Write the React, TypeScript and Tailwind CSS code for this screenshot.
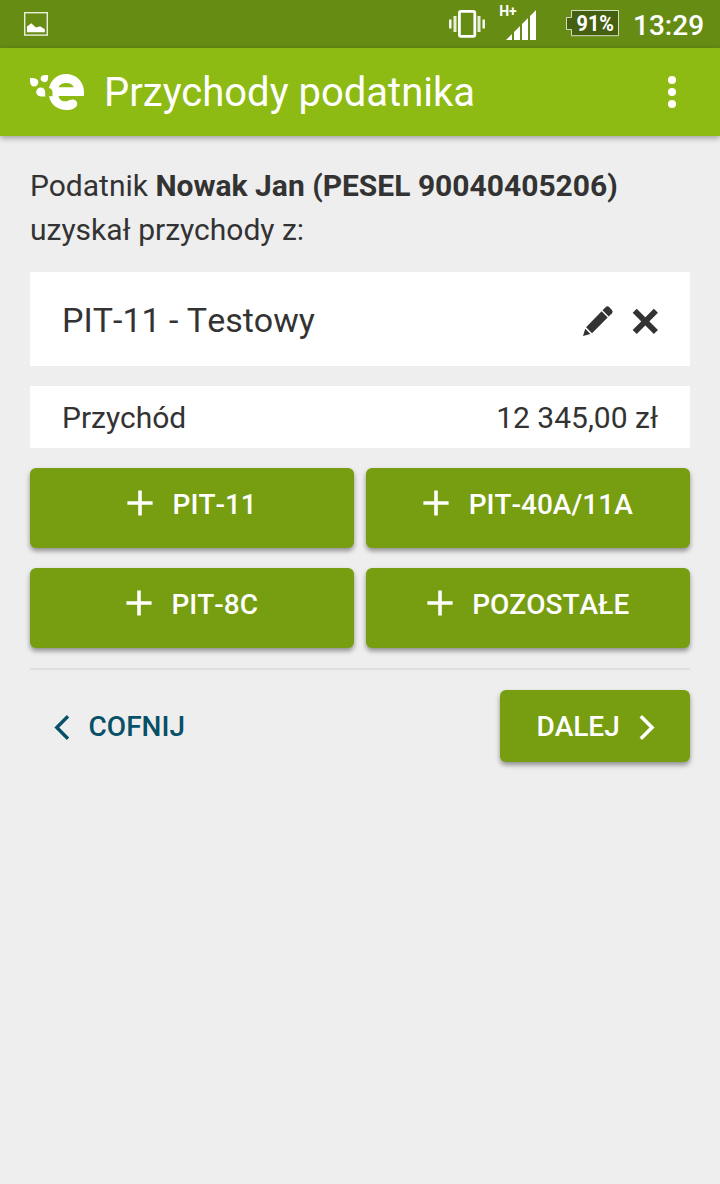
import type { ReactNode } from "react";

function StatusBar() {
  return (
    <div className="flex h-12 items-center bg-[#678c14] pr-4 pl-6 text-white">
      <svg className="h-12 w-6" viewBox="24 0 24 48" fill="none">
        <rect x="24.7" y="12.7" width="22.6" height="22.4" stroke="#fff" strokeOpacity=".85" strokeWidth="1.4" />
        <path d="M27 32.3V26.5L31.3 23.3L36 27.5L40 26.2L44.8 29.3V32.3Z" fill="#fff" />
      </svg>
      <div className="ml-auto flex items-center">
        <svg className="h-12 w-[172px]" viewBox="448 0 172 48" fill="none">
          <rect x="459.4" y="11.4" width="15.4" height="25" rx="1.6" stroke="#fff" strokeWidth="2.8" />
          <path d="M450.3 19.5V28.5M483.7 19.5V28.5" stroke="#fff" strokeWidth="2.4" />
          <path d="M455 16V32M479 16V32" stroke="#fff" strokeOpacity=".85" strokeWidth="3" />
          <path d="M506 40L512 34V40ZM514 32L520 26V40H514ZM522 24L528 18V40H522ZM530 16L536 10V40H530Z" fill="#fff" />
          <path d="M571.5 10.5H618.5V35.7H571.5V29.5H566.5V17.5H571.5Z" fill="#456010" stroke="#fff" strokeOpacity=".75" />
          <text x="499.2" y="16" fill="#fff" fontFamily="Roboto, sans-serif" fontWeight="700" fontSize="14" textLength="17.5" lengthAdjust="spacingAndGlyphs">H+</text>
          <text x="576.5" y="30.6" fill="#fff" fontFamily="Roboto, sans-serif" fontWeight="700" fontSize="21.5" textLength="37.5" lengthAdjust="spacingAndGlyphs">91%</text>
        </svg>
        <span className="ml-[13px] w-[71px] pt-1 text-[28px] leading-none font-medium whitespace-nowrap">13:29</span>
      </div>
    </div>
  );
}

function Logo() {
  return (
    <svg className="h-[88px] w-[56px] shrink-0" viewBox="29 48 56 88" fill="none">
      <path d="M30 78C34 77.6 38.3 78.4 38.3 82.2C38.3 84.6 36.4 86.4 34.1 86.4C30.1 86.4 29.8 82 30 78Z" fill="#fff" />
      <path d="M48 75C48.3 79.3 47.8 82.2 44.4 82.2C42.2 82.2 40.6 80.6 40.6 78.6C40.6 75.2 44 74.8 48 75Z" fill="#fff" />
      <path d="M45.2 96.5C40.5 96.8 36.2 95.9 36.2 91.9C36.2 89.4 38.3 87.5 40.9 87.5C45.2 87.5 45.5 92 45.2 96.5Z" fill="#fff" />
      <path
        d="M49 88C50.8 79.8 57.6 74 66 74C76.5 74 84 82 84 92V96H58.6C59.3 99.8 62.5 102 66.4 101.2C69 100.6 70.5 99.4 73.3 99.6C75.6 99.8 77.3 101.6 77.2 104C76.9 108 71.8 110 66.5 110C57.5 110 50.5 104.5 49 96.3H52.5V92.8C52.5 90.3 51.2 88.4 49 88ZM58.4 87.3H73.9C72.6 84.4 69.8 83 66.3 83C62.7 83 59.6 84.4 58.4 87.3Z"
        fill="#fff"
      />
    </svg>
  );
}

function Header() {
  return (
    <header className="relative flex h-[88px] items-center bg-[#8dbb14] pr-11 pl-[29px] text-white shadow-[0_2px_6px_rgba(0,0,0,0.35)]">
      <Logo />
      <h1 className="ml-[19px] pt-0.5 text-[40px] leading-none whitespace-nowrap">Przychody podatnika</h1>
      <div className="ml-auto flex flex-col gap-1">
        <i className="size-2 rounded-full bg-white" />
        <i className="size-2 rounded-full bg-white" />
        <i className="size-2 rounded-full bg-white" />
      </div>
    </header>
  );
}

function AddButton({ children }: { children: ReactNode }) {
  return (
    <button className="flex h-20 items-start justify-center rounded-[6px] bg-[#779e11] pt-[21px] text-[28px] leading-8 font-medium text-white [font-kerning:none] shadow-[0_3px_5px_rgba(0,0,0,0.4)]">
      <svg className="mt-px mr-[19.4px] size-[26px]" viewBox="0 0 26 26" stroke="#fff" strokeWidth="3.6">
        <path d="M13 .4V25.6M.4 13H25.6" />
      </svg>
      <span>{children}</span>
    </button>
  );
}

export default function App() {
  return (
    <div className="min-h-[1184px] w-[720px] bg-[#eeeeee] font-['Roboto',sans-serif] text-[#333333]">
      <StatusBar />
      <Header />
      <main className="px-[30px] pt-7">
        <p className="text-[30px] leading-[44px]">
          Podatnik <b className="font-bold">Nowak Jan (PESEL 90040405206)</b>
          <br />
          uzyskał przychody z:
        </p>
        <section className="mt-5 flex h-[94px] items-center bg-white pt-0.5 pr-[31px] pl-8">
          <h2 className="text-[34px] leading-none [font-kerning:none]">PIT-11 - Testowy</h2>
          <svg className="mt-0.5 ml-auto h-8 w-[77px]" viewBox="582 305 77 32" fill="#333">
            <path d="M583 336L585.3 328.8L590.4 333.9Z" />
            <path d="M586.1 327.3L601.6 311.3L607.7 317.4L592 333.2Z" />
            <path d="M602.5 310.3L605.8 307.1Q607.5 305.6 609.1 307.1L611.9 310Q613.4 311.7 612 313.3L608.7 316.5Z" />
            <path d="M634.7 310.8L655.9 332M655.9 310.8L634.7 332" stroke="#333" strokeWidth="5.8" />
          </svg>
        </section>
        <section className="mt-5 flex h-[62px] items-center justify-between bg-white px-8 pt-0.5 text-[30px] leading-none">
          <span>Przychód</span>
          <span>12 345,00 zł</span>
        </section>
        <div className="mt-5 grid grid-cols-2 gap-x-3 gap-y-5">
          <AddButton>PIT-11</AddButton>
          <AddButton>PIT-40A/11A</AddButton>
          <AddButton>PIT-8C</AddButton>
          <AddButton>POZOSTAŁE</AddButton>
        </div>
        <hr className="mt-5 border-t-2 border-[#dfdfdf]" />
        <nav className="mt-5 flex h-[72px] justify-between text-[28px] leading-8 font-medium [font-kerning:none]">
          <button className="flex items-center pt-0.5 pl-6 text-[#075067]">
            <svg className="mt-px mr-[18.6px] h-[26px] w-4" viewBox="0 0 16 26" fill="none" stroke="currentColor" strokeWidth="3.4">
              <path d="M14 1.3L2.8 12.5L14 23.7" />
            </svg>
            COFNIJ
          </button>
          <button className="flex w-[190px] items-center rounded-[6px] bg-[#779e11] pt-0.5 pl-[36.4px] text-white shadow-[0_3px_5px_rgba(0,0,0,0.4)]">
            DALEJ
            <svg className="mt-px ml-[19px] h-[26px] w-4" viewBox="0 0 16 26" fill="none" stroke="currentColor" strokeWidth="3.6">
              <path d="M1.8 1.3L13 12.5L1.8 23.7" />
            </svg>
          </button>
        </nav>
      </main>
    </div>
  );
}
